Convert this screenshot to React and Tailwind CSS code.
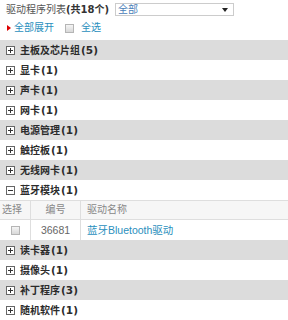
import React from "react";

const groups1 = [
  ["主板及芯片组", 5],
  ["显卡", 1],
  ["声卡", 1],
  ["网卡", 1],
  ["电源管理", 1],
  ["触控板", 1],
  ["无线网卡", 1],
];
const groups2 = [
  ["读卡器", 1],
  ["摄像头", 1],
  ["补丁程序", 3],
  ["随机软件", 1],
];

const FONT = { fontFamily: '"DejaVu Sans", "Noto Sans CJK SC", sans-serif' };
const LINK = { fontFamily: '"Liberation Sans", "Noto Sans CJK SC", sans-serif' };

function Box({ minus }) {
  return (
    <span className="w-[9px] h-[9px] border border-[#666] bg-white flex items-center justify-center relative shrink-0">
      <span className="absolute w-[5px] h-[1px] bg-[#333]"></span>
      {!minus && <span className="absolute w-[1px] h-[5px] bg-[#333]"></span>}
    </span>
  );
}

function Row({ name, n, gray, minus }) {
  return (
    <div className={`h-[20px] flex items-center pl-[6px] gap-[5px] ${gray ? "bg-[#dcdcdc]" : "bg-white"}`}>
      <Box minus={minus} />
      <span className="font-bold text-[10px] text-[#2b2b2b] leading-none whitespace-nowrap">
        {name}
        <span className="text-[10.5px] ml-[1px]">({n})</span>
      </span>
    </div>
  );
}

function Check() {
  return <span className="w-[9px] h-[9px] border border-[#b5b5b5] bg-gradient-to-b from-[#f5f5f5] to-[#d8d8d8] inline-block"></span>;
}

export default function App() {
  return (
    <div className="w-[288px] h-[320px] bg-white overflow-hidden" style={FONT}>
      <div className="h-[19px] flex items-center pl-[6px]">
        <span className="text-[10px] text-[#555] leading-none">驱动程序列表</span>
        <span className="text-[10px] text-[#333] font-bold leading-none">(共18个)</span>
        <div className="ml-[6px] w-[119px] h-[13px] border border-[#ccc] flex items-center justify-between pl-[2px] pr-[5px]">
          <span className="text-[10px] text-[#4a80b8] leading-none">全部</span>
          <span className="w-0 h-0 border-l-[3px] border-r-[3px] border-t-[4px] border-l-transparent border-r-transparent border-t-[#222]"></span>
        </div>
      </div>
      <div className="h-[17px] flex items-center pl-[7px] pt-[1px]">
        <span className="w-0 h-0 border-t-[3px] border-b-[3px] border-l-[4px] border-t-transparent border-b-transparent border-l-[#d00] mr-[3px]"></span>
        <span className="text-[10px] text-[#2a8fbd] leading-none">全部展开</span>
        <span className="ml-[11px] mr-[7px] flex"><Check /></span>
        <span className="text-[10px] text-[#2a8fbd] leading-none">全选</span>
      </div>
      <div className="h-[4px]"></div>
      {groups1.map(([n, c], i) => (
        <Row key={n} name={n} n={c} gray={i % 2 === 0} />
      ))}
      <Row name="蓝牙模块" n={1} minus />
      <div className="h-[20px] bg-[#f6f6f6] border-t border-b border-[#dedede] flex items-center text-[10px] text-[#888] leading-none">
        <div className="w-[31px] pl-[2px] h-full flex items-center border-r border-[#dedede]">选择</div>
        <div className="w-[50px] h-full flex items-center justify-center border-r border-[#dedede]">编号</div>
        <div className="pl-[6px]">驱动名称</div>
      </div>
      <div className="h-[20px] bg-white flex items-center text-[10px] leading-none">
        <div className="w-[31px] h-full flex items-center justify-center border-r border-[#dedede]"><Check /></div>
        <div className="w-[50px] h-full flex items-center justify-center border-r border-[#dedede] text-[#666] text-[10.5px]" style={LINK}>36681</div>
        <div className="pl-[6px] text-[#2a8fbd] text-[10.5px]" style={LINK}>蓝牙Bluetooth驱动</div>
      </div>
      {groups2.map(([n, c], i) => (
        <Row key={n} name={n} n={c} gray={i % 2 === 0} />
      ))}
    </div>
  );
}
